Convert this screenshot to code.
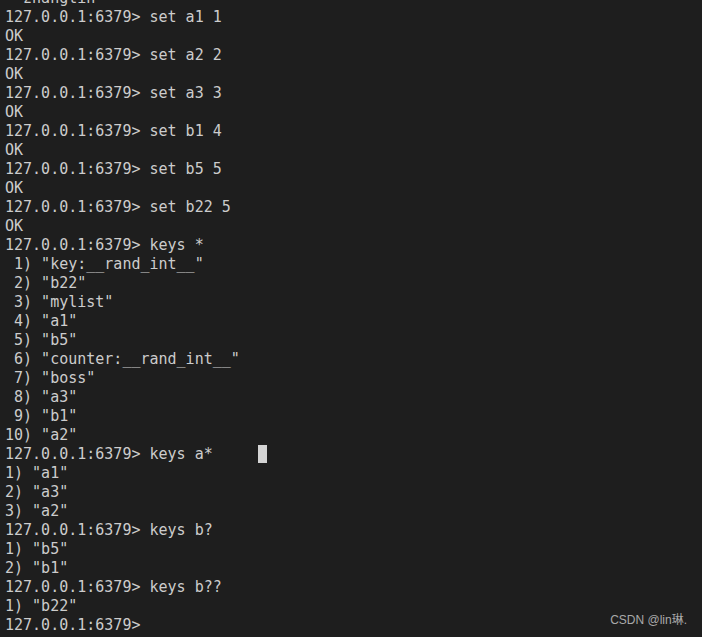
const prompt = '127.0.0.1:6379> ';

const lines: string[] = [
  ' "zhangtin"',
  prompt + 'set a1 1',
  'OK',
  prompt + 'set a2 2',
  'OK',
  prompt + 'set a3 3',
  'OK',
  prompt + 'set b1 4',
  'OK',
  prompt + 'set b5 5',
  'OK',
  prompt + 'set b22 5',
  'OK',
  prompt + 'keys *',
  ' 1) "key:__rand_int__"',
  ' 2) "b22"',
  ' 3) "mylist"',
  ' 4) "a1"',
  ' 5) "b5"',
  ' 6) "counter:__rand_int__"',
  ' 7) "boss"',
  ' 8) "a3"',
  ' 9) "b1"',
  '10) "a2"',
  prompt + 'keys a*     ',
  '1) "a1"',
  '2) "a3"',
  '3) "a2"',
  prompt + 'keys b?',
  '1) "b5"',
  '2) "b1"',
  prompt + 'keys b??',
  '1) "b22"',
  prompt,
];

export default function App() {
  return (
    <div className="w-[702px] h-[637px] bg-[#1e1e1e] overflow-hidden relative">
      <div className="-mt-[11px] pl-[5px] text-[15px] leading-[19px] text-[#cccccc] font-['DejaVu_Sans_Mono',monospace] whitespace-pre">
        {lines.map((l, i) => (
          <div key={i} className="h-[19px]">
            {i === 24 ? (
              <>
                {l}
                <span className="inline-block w-[9px] h-[18px] bg-[#d4d4d4] align-[-4px]" />
              </>
            ) : (
              l
            )}
          </div>
        ))}
      </div>
      {/* watermark */}
      <div className="absolute right-[15px] bottom-[8px] text-[12px] text-[#a9a9a9] font-['Liberation_Sans','Noto_Sans_CJK_SC',sans-serif]">
        CSDN @lin琳.
      </div>
    </div>
  );
}
